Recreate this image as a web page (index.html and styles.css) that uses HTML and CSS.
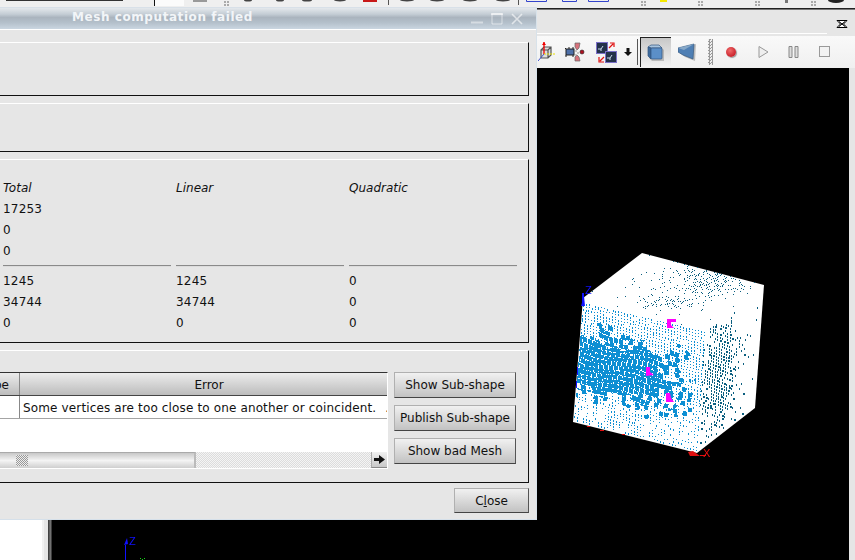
FILE: index.html
```html
<!DOCTYPE html>
<html lang="en">
<head>
<meta charset="UTF-8" />
<title>Mesh computation failed</title>
<link rel="stylesheet" href="styles.css">
</head>
<body>
  <div class="desktop">
    <!-- main window toolbar, mostly hidden behind the dialog -->
    <svg class="top-strip" width="855" height="8" viewBox="0 0 855 8">
      <rect x="6" y="0" width="117" height="1" fill="#333"/>
      <rect x="154" y="0" width="1" height="6" fill="#111"/>
      <rect x="155" y="0" width="29" height="6" fill="#fbfbfb"/>
      <rect x="193" y="0" width="14" height="2" fill="#999"/>
      <g fill="#444">
        <ellipse cx="248" cy="0" rx="4" ry="1.500"/><ellipse cx="280" cy="0" rx="4" ry="1.500"/>
        <ellipse cx="307" cy="0" rx="5" ry="1.500"/><ellipse cx="340" cy="0" rx="6" ry="1.500"/>
        <ellipse cx="407" cy="0" rx="7" ry="1.500"/><ellipse cx="437" cy="0" rx="7" ry="1.500"/>
        <ellipse cx="470" cy="0" rx="7" ry="1.500"/><ellipse cx="503" cy="0" rx="7" ry="1.500"/>
      </g>
      <rect x="363" y="0" width="14" height="2" fill="#c81818"/>
      <rect x="388" y="0" width="1" height="5" fill="#555"/>
      <rect x="518" y="0" width="1" height="5" fill="#555"/>
      <g fill="none" stroke="#3344cc">
        <path d="M526.500 0v1.500h20v-1.500M562.500 0v1.500h14v-1.500M588.500 0v1.500h20v-1.500"/>
      </g>
      <rect x="660" y="0" width="7" height="2" fill="#f5e800"/>
      <g fill="#aaa">
        <rect x="224" y="1" width="2" height="2"/><rect x="227" y="1" width="2" height="2"/><rect x="224" y="4" width="2" height="2"/><rect x="227" y="4" width="2" height="2"/>
        <rect x="641" y="1" width="2" height="2"/><rect x="644" y="1" width="2" height="2"/><rect x="641" y="4" width="2" height="2"/><rect x="644" y="4" width="2" height="2"/>
        <rect x="698" y="1" width="2" height="2"/><rect x="701" y="1" width="2" height="2"/><rect x="698" y="4" width="2" height="2"/><rect x="701" y="4" width="2" height="2"/>
        <rect x="755" y="1" width="2" height="2"/><rect x="758" y="1" width="2" height="2"/><rect x="755" y="4" width="2" height="2"/><rect x="758" y="4" width="2" height="2"/>
        <rect x="785" y="0" width="3" height="3" fill="#777"/>
        <rect x="811" y="1" width="2" height="2"/><rect x="814" y="1" width="2" height="2"/><rect x="811" y="4" width="2" height="2"/><rect x="814" y="4" width="2" height="2"/>
      </g>
      <ellipse cx="836" cy="0" rx="8" ry="3" fill="#222"/>
    </svg>

    <div class="main">
      <div class="tree"></div>
      <div class="tree-gap"></div>
      <div class="splitter"></div>
      <div class="viewer">
        <div class="viewer-head">
          <svg class="float-btn" width="12" height="8" viewBox="0 0 12 8">
            <path d="M1 .5h10L7.500 4 11 7.500H1L4.500 4z" fill="#fff" stroke="#000"/>
            <path d="M3 1.500l6 5M9 1.500l-6 5" stroke="#000"/>
          </svg>
        </div>
        <div class="viewer-tools">
          <!-- axes box -->
          <svg class="tool" width="17" height="20" viewBox="0 0 17 20">
            <path d="M3 8l3-3h7v8l-3 3H3z M3 8h7v8 M10 8l3-3" fill="#ddd" stroke="#555" stroke-width="1.200"/>
            <path d="M6 0v12" stroke="#e00" stroke-width="1.300"/>
            <path d="M4 3l2-3 2 3z" fill="#e00"/>
            <path d="M6 12h11" stroke="#e8e000" stroke-dasharray="2 1"/>
            <path d="M6 12l-6 7" stroke="#4455cc"/>
          </svg>
          <!-- camera with markers -->
          <svg class="tool" style="margin-left:10px" width="20" height="20" viewBox="0 0 20 20">
            <path d="M10 1h5l-1 5-2 2-2-3z M10 19h5l-1-4-2-2-2 2z" fill="#d8727c" stroke="#666" stroke-width=".7"/>
            <rect x="1" y="7" width="8" height="6" fill="#4d6fa8" stroke="#222"/>
            <path d="M1 7l-1-1M4 7V5M8 7V5M1 13v2M8 13v2" stroke="#222"/>
            <path d="M10 9h2M12 11h2M10 13h2" stroke="#999"/>
            <circle cx="17" cy="10" r="2" fill="#b01020" stroke="#222" stroke-width=".6"/>
          </svg>
          <!-- view pair with arrows -->
          <svg class="tool" style="margin-left:11px" width="21" height="21" viewBox="0 0 21 21">
            <rect x=".5" y=".5" width="11" height="11" fill="#24324a" stroke="#7a70c8"/>
            <rect x="9.500" y="9.500" width="11" height="11" fill="#24324a" stroke="#7a70c8"/>
            <path d="M2 7h3l2-3M5 7v2M11 16h3l2-3M14 16v2" fill="none" stroke="#cde"/>
            <path d="M13 6l4-4M14 1h4v4M8 15l-4 4M3 15v5h5" fill="none" stroke="#e01010" stroke-width="1.200"/>
          </svg>
          <svg class="tool" style="margin-left:7px" width="8" height="8" viewBox="0 0 8 8">
            <path d="M2.500 0h3v4H8L4 8 0 4h2.500z" fill="#111"/>
          </svg>
          <div class="tool-sep"></div>
          <div class="tool-active">
            <svg width="18" height="18" viewBox="0 0 18 18">
              <path d="M3 3h11l3 3v11H5l-3-3z" fill="#777" opacity=".4"/>
              <path d="M1 3l3-2h8l3 3H4z" fill="#a8c4de" stroke="#31557f" stroke-width=".7"/>
              <path d="M1 3l3 1v11l-3-3z" fill="#3d6a9c" stroke="#31557f" stroke-width=".7"/>
              <rect x="4" y="4" width="11" height="11" rx="1" fill="#5b8fc8" stroke="#31557f" stroke-width=".7"/>
            </svg>
          </div>
          <svg class="tool" style="margin-left:7px" width="18" height="18" viewBox="0 0 18 18">
            <path d="M1 5l16-5-1 17L6 13 1 9z" fill="#777" opacity=".45" transform="translate(1 1)"/>
            <path d="M0 5l16-4-1 15L5 12 0 9z" fill="#4f7fb4" stroke="#36597f" stroke-width=".7"/>
            <path d="M0 5l6 2 10-6z" fill="#86a8c8"/>
          </svg>
          <div class="tool-grip"></div>
          <div class="rec-dot"></div>
          <svg class="tool" style="margin-left:22px" width="11" height="12" viewBox="0 0 11 12">
            <path d="M1 .5L10 6l-9 5.500z" fill="#eee" stroke="#999"/>
          </svg>
          <svg class="tool" style="margin-left:19px" width="11" height="12" viewBox="0 0 11 12">
            <path d="M1 .5h3v11H1zM7 .5h3v11H7z" fill="#ddd" stroke="#888"/>
          </svg>
          <svg class="tool" style="margin-left:20px" width="11" height="12" viewBox="0 0 11 12">
            <rect x=".5" y=".5" width="10" height="10" fill="#f2f2f2" stroke="#999"/>
          </svg>
        </div>
        <div class="viewport">
          <canvas id="scene" width="797" height="492"></canvas>
          <span class="axis-label axis-z">Z</span>
          <span class="axis-label axis-x">X</span>
          <span class="axis-label axis-z2">Z</span>
        </div>
      </div>
    </div>

    <div class="dialog">
      <div class="titlebar">
        <span class="title">Mesh computation failed</span>
        <div class="win-btns">
          <svg width="12" height="12" viewBox="0 0 12 12"><path d="M0 9.500h12" stroke="#fff" stroke-opacity=".45" stroke-width="2"/></svg>
          <svg width="12" height="12" viewBox="0 0 12 12"><path d="M1 1h10v10H1z" fill="none" stroke="#fff" stroke-opacity=".55"/><path d="M0 1h12" stroke="#fff" stroke-opacity=".55" stroke-width="2"/></svg>
          <svg width="12" height="12" viewBox="0 0 12 12"><path d="M1 1l10 10M11 1L1 11" stroke="#fff" stroke-opacity=".6" stroke-width="1.600"/></svg>
        </div>
      </div>
      <div class="dialog-body">
        <div class="panel panel-top"></div>
        <div class="panel panel-mid"></div>
        <div class="panel panel-stats">
          <div class="stats">
            <div class="head">Total</div><div class="head">Linear</div><div class="head">Quadratic</div>
            <div>17253</div><div></div><div></div>
            <div>0</div><div></div><div></div>
            <div>0</div><div></div><div></div>
            <div class="rule"></div><div class="rule"></div><div class="rule"></div>
            <div>1245</div><div>1245</div><div>0</div>
            <div>34744</div><div>34744</div><div>0</div>
            <div>0</div><div>0</div><div>0</div>
          </div>
        </div>
        <div class="panel panel-errors">
          <div class="table">
            <div class="tr th">
              <div class="col-type">Type</div>
              <div class="col-error">Error</div>
            </div>
            <div class="tr td">
              <div class="col-type"></div>
              <div class="col-error">Some vertices are too close to one another or coincident.<span class="more">...</span></div>
            </div>
            <div class="table-fill"></div>
            <div class="hscroll">
              <div class="thumb"><div class="thumb-grip"></div></div>
              <div class="track"></div>
              <div class="arrow">
                <svg width="11" height="9" viewBox="0 0 11 9"><path d="M0 3h5V0l6 4.500L5 9V6H0z" fill="#111"/></svg>
              </div>
            </div>
          </div>
          <div class="side-btns">
            <button class="btn">Show Sub-shape</button>
            <button class="btn">Publish Sub-shape</button>
            <button class="btn">Show bad Mesh</button>
          </div>
        </div>
        <div class="dialog-foot">
          <button class="btn btn-close">C<u>l</u>ose</button>
        </div>
      </div>
    </div>
  </div>
  <script src="mesh.js"></script>
</body>
</html>
```
FILE: styles.css
```css
html, body {
  margin: 0;
  height: 100%;
  overflow: hidden;
}
body {
  font-family: "DejaVu Sans", sans-serif;
  font-size: 12px;
  color: #111;
  background: #e6e6e6;
}
.desktop {
  position: relative;
  width: 855px;
  height: 560px;
  overflow: hidden;
  display: flex;
  flex-direction: column;
}
.top-strip {
  display: block;
  flex: none;
  background: #efefef;
}
.main {
  flex: 1;
  display: flex;
  min-height: 0;
  border-top: 1px solid #222;
}
.tree {
  width: 42px;
  background: #fff;
}
.tree-gap {
  width: 6px;
  border-left: 2px solid #f2f2f2;
  box-sizing: border-box;
  background: #e6e6e6;
}
.splitter {
  width: 4px;
  background: linear-gradient(to right, #333, #777 60%, #222);
}
.viewer {
  flex: 1;
  display: flex;
  flex-direction: column;
  padding-right: 6px;
}
.viewer-head {
  height: 27px;
  box-sizing: border-box;
  position: relative;
  margin-right: -6px;
  border-top: 1px solid #777;
  background: linear-gradient(#fff, #fff) no-repeat 0 23px / 775px 1px;
}
.float-btn {
  position: absolute;
  left: 784px;
  top: 10px;
}
.viewer-tools {
  height: 32px;
  box-sizing: border-box;
  display: flex;
  align-items: center;
  padding-left: 486px;
  background: linear-gradient(to bottom, #f9f9f9, #f0f0f0);
  margin-right: -6px;
}
.tool {
  flex: none;
  display: block;
}
.tool-sep {
  width: 1px;
  height: 26px;
  margin-left: 5px;
  background: #555;
}
.tool-active {
  width: 31px;
  height: 30px;
  margin-left: 2px;
  box-sizing: border-box;
  border-top: 1px solid #222;
  border-left: 1px solid #222;
  background: linear-gradient(to bottom, #c8c8c8, #f2f2f2);
  display: flex;
  align-items: center;
  justify-content: center;
}
.tool-grip {
  width: 5px;
  height: 26px;
  margin-left: 12px;
  background: repeating-conic-gradient(#999 0 25%, #eee 0 50%) 0 0 / 3px 3px;
}
.rec-dot {
  width: 10px;
  height: 10px;
  margin-left: 13px;
  border-radius: 50%;
  background: radial-gradient(circle at 40% 35%, #f06a6a, #c81e28 75%);
  box-shadow: 1px 1px 1px #999;
}
.viewport {
  flex: 1;
  position: relative;
  background: #000;
  min-height: 0;
}
#scene {
  display: block;
}
.axis-label {
  position: absolute;
  font-family: "Liberation Sans", sans-serif;
  font-size: 11px;
  line-height: 11px;
}
.axis-z {
  left: 533px;
  top: 217px;
  color: #1010ff;
}
.axis-x {
  left: 651px;
  top: 380px;
  color: #f01010;
}
.axis-z2 {
  left: 77px;
  top: 468px;
  color: #1010ff;
}

/* dialog window */
.dialog {
  position: absolute;
  left: -100px;
  top: 7px;
  width: 637px;
  height: 513px;
  box-sizing: border-box;
  display: flex;
  flex-direction: column;
  background: #e6e6e6;
  border-right: 1px solid #d8e2ea;
  border-bottom: 1px solid #d5e0ea;
}
.titlebar {
  height: 23px;
  flex: none;
  display: flex;
  align-items: center;
  box-sizing: border-box;
  padding: 0 13px 3px 172px;
  border-top: 1px solid #d8e0e8;
  border-bottom: 1px solid #fff;
  background: linear-gradient(to bottom, #e4e8ec, #c3ccd4 30%, #aab4be 45%, #b4c0cb 70%, #cad6e1);
}
.title {
  flex: 1;
  color: #f2f5f8;
  font-weight: bold;
  letter-spacing: .57px;
  white-space: nowrap;
}
.win-btns {
  display: flex;
  gap: 8px;
  margin-top: 3px;
}
.dialog-body {
  flex: 1;
  display: flex;
  flex-direction: column;
  gap: 7px;
  padding: 12px 7px 0;
  min-height: 0;
}
.panel {
  flex: none;
  box-sizing: border-box;
  border-top: 1px solid #fff;
  border-right: 1px solid #111;
  border-bottom: 1px solid #111;
}
.panel-top {
  height: 54px;
}
.panel-mid {
  height: 49px;
}
.panel-stats {
  height: 184px;
  padding: 18px 0 0 96px;
}
.stats {
  display: grid;
  grid-template-columns: 168px 168px 168px;
  grid-template-rows: repeat(4, 21px) 9px repeat(3, 21px);
  column-gap: 5px;
  line-height: 21px;
  letter-spacing: .2px;
}
.head {
  font-style: italic;
  letter-spacing: 0;
}
.stats .rule {
  height: 1px;
  margin-top: 3px;
  background: #8a8a8a;
  border-bottom: 1px solid #dcdcdc;
}
.panel-errors {
  height: 133px;
  padding: 21px 12px 13px 0;
  display: flex;
  gap: 6px;
}
.table {
  flex: 1;
  min-width: 0;
  overflow: hidden;
  display: flex;
  flex-direction: column;
  background: #fff;
  border-top: 1px solid #333;
  border-right: 1px solid #fff;
  border-bottom: 1px solid #fff;
}
.tr {
  display: flex;
  flex: none;
  height: 23px;
  box-sizing: border-box;
  line-height: 24px;
}
.th {
  background: linear-gradient(to bottom, #ececec, #bcbcbc);
  border-bottom: 1px solid #444;
}
.td {
  border-bottom: 1px solid #a4a4a4;
}
.col-type {
  flex: none;
  width: 113px;
  box-sizing: border-box;
  padding-right: 10px;
  text-align: right;
  border-right: 1px solid #888;
}
.col-error {
  flex: none;
  width: 378px;
  white-space: nowrap;
}
.th .col-error {
  text-align: center;
}
.td .col-error {
  padding-left: 3px;
  letter-spacing: .14px;
}
.more {
  margin-left: 9px;
}
.table-fill {
  flex: 1;
}
.hscroll {
  flex: none;
  height: 16px;
  display: flex;
}
.thumb {
  width: 289px;
  flex: none;
  box-sizing: border-box;
  padding-left: 109px;
  display: flex;
  align-items: center;
  background: linear-gradient(to bottom, #c8c8c8, #f4f4f4 50%, #cfcfcf);
  border-right: 2px solid #bbb;
  border-top: 1px solid #aaa;
}
.thumb-grip {
  width: 12px;
  height: 11px;
  background: repeating-conic-gradient(#999 0 25%, #eee 0 50%) 0 0 / 2px 2px;
}
.track {
  flex: 1;
  background: repeating-conic-gradient(#dcdcdc 0 25%, #f4f4f4 0 50%) 0 0 / 2px 2px;
}
.arrow {
  width: 16px;
  flex: none;
  box-sizing: border-box;
  display: flex;
  align-items: center;
  justify-content: center;
  background: linear-gradient(to bottom, #f0f0f0, #c8c8c8);
  border-left: 1px solid #aaa;
  border-bottom: 1px solid #888;
}
.side-btns {
  flex: none;
  width: 122px;
  display: flex;
  flex-direction: column;
  gap: 7px;
}
.btn {
  height: 26px;
  padding: 0;
  font-family: inherit;
  font-size: 12px;
  color: #111;
  background: linear-gradient(to bottom, #f1f1f1, #c2c2c2);
  border: 1px solid;
  border-color: #b0b0b0 #555 #444 #b0b0b0;
  border-radius: 0;
}
.dialog-foot {
  display: flex;
  justify-content: flex-end;
  margin-top: -2px;
}
.btn-close {
  width: 75px;
  height: 25px;
}
```
FILE: mesh.js
```js
// fake mesh preview: white cube with scattered node points
const canvas = document.getElementById('scene');
const ctx = canvas.getContext('2d');
const OX = 52, OY = 68;  // viewport offset in the window

let seed = 4711;
function rnd() {
  seed = (seed * 1664525 + 1013904223) % 4294967296;
  return seed / 4294967296;
}

// same cell always gets the same value
function hash(a, b) {
  const n = Math.sin(a * 12.9898 + b * 78.233) * 43758.5453;
  return n - Math.floor(n);
}

function px(x, y, w, h, color) {
  ctx.fillStyle = color;
  ctx.fillRect(Math.round(x) - OX, Math.round(y) - OY, w, h);
}

function poly(points, color) {
  ctx.fillStyle = color;
  ctx.beginPath();
  points.forEach((p, i) => {
    if (i === 0) ctx.moveTo(p[0] - OX, p[1] - OY);
    else ctx.lineTo(p[0] - OX, p[1] - OY);
  });
  ctx.closePath();
  ctx.fill();
}

// point inside a face given by its four corners (u, v in 0..1)
function onFace(f, u, v) {
  const x = (1 - v) * ((1 - u) * f[0][0] + u * f[1][0]) + v * ((1 - u) * f[3][0] + u * f[2][0]);
  const y = (1 - v) * ((1 - u) * f[0][1] + u * f[1][1]) + v * ((1 - u) * f[3][1] + u * f[2][1]);
  return [x, y];
}

function blob(x, y, cx, cy, rx, ry) {
  const dx = (x - cx) / rx, dy = (y - cy) / ry;
  return Math.exp(-(dx * dx + dy * dy));
}

function smooth(a, b, t) {
  const k = Math.min(1, Math.max(0, (t - a) / (b - a)));
  return k * k * (3 - 2 * k);
}

const frontFace = [[583, 303], [705, 332], [697, 452], [574, 421]];
const rightFace = [[705, 332], [764, 285], [755, 408], [697, 452]];
const topFace = [[642, 253], [764, 285], [705, 332], [583, 298]];

poly([[642, 253], [764, 285], [755, 408], [697, 453], [573, 422], [583, 298]], '#fff');

// front face: solid cells with white cracks in the middle, fine dots around them
const BLUE = '#0d8fd3';
const FW = 124, FH = 122;  // face size in pixels, roughly
const PITCH = 5;
for (let t = 0; t < FH; t += 0.5) {
  for (let s = 0; s < FW; s += 0.5) {
    const u = s / FW, v = t / FH;
    // bend the grid a little so the cells don't line up
    const tw = t + 2 * Math.sin(s / 11 + t / 19);
    const row = Math.floor(tw / PITCH);
    const sw = s + 2 * Math.sin(t / 9 + s / 23) + hash(row, 3) * PITCH;
    const col = Math.floor(sw / PITCH);
    const core = smooth(0.1, 0.42, v) * (1 - smooth(0.55, 0.85, v)) * (1 - smooth(0.5, 1, u));
    const p = onFace(frontFace, u, v);
    if (hash(row, col) < core * 1.15) {
      const crack = tw - row * PITCH < 1 || sw - col * PITCH < 1;
      if (!crack) px(p[0], p[1], 1, 1, BLUE);
    } else if (s % 3 < 0.5 && t % 3 < 0.5) {
      const keep = v > 0.62 ? 0.5 + 0.3 * blob(p[0], p[1], 625, 418, 22, 18) : 0.92;
      if (rnd() < keep) px(p[0], p[1], 1, 1 + (rnd() < 0.35 ? 1 : 0), BLUE);
    }
  }
}

// right face, dark dots
const DARK = '#0b5f80';
for (let v = 0; v < 0.98; v += 0.024) {
  for (let u = 0; u < 0.98; u += 0.045) {
    const p = onFace(rightFace, u, v);
    const d = 1.1 * blob(p[0], p[1], 716, 378, 15, 52) + 0.25 * blob(p[0], p[1], 735, 345, 18, 30);
    if (rnd() < d) px(p[0], p[1], 1 + (rnd() < 0.2 ? 1 : 0), 2, DARK);
  }
}

// top face, sparse dots
for (let v = 0; v < 0.98; v += 0.025) {
  for (let u = 0; u < 0.98; u += 0.018) {
    const p = onFace(topFace, u, v);
    const d = 0.6 * blob(p[0], p[1], 706, 280, 34, 14) + 0.45 * blob(p[0], p[1], 665, 302, 28, 6) + 0.012;
    if (rnd() < d) px(p[0], p[1], 1, 1, DARK);
  }
}

// magenta element markers
poly([[667, 319], [676, 319], [676, 322], [671, 322], [671, 325], [674, 328], [667, 328]], '#ff00ff');
poly([[646, 367], [650, 367], [650, 372], [654, 375], [646, 376]], '#ff00ff');
poly([[666, 393], [670, 393], [671, 398], [674, 402], [666, 402]], '#ff00ff');

// axes of the big trihedron
px(582, 293, 2, 12, '#1010ff');
poly([[581, 306], [585, 306], [584, 296]], '#1010ff');
px(577, 367, 1, 8, '#1010ff');
px(576, 381, 1, 7, '#1010ff');
poly([[688, 452], [693, 451], [700, 456], [690, 456]], '#e01010');
px(700, 455, 6, 1, '#e01010');
px(587, 426, 3, 1, '#e01010');
px(600, 430, 4, 1, '#e01010');
px(622, 434, 3, 1, '#e01010');

// small trihedron in the corner
px(125, 545, 1, 15, '#1010ff');
poly([[124, 545], [128, 544], [127, 538]], '#1010ff');
px(140, 558, 1, 1, '#10e010');
px(144, 558, 1, 1, '#10e010');
px(142, 559, 1, 1, '#10e010');
```
